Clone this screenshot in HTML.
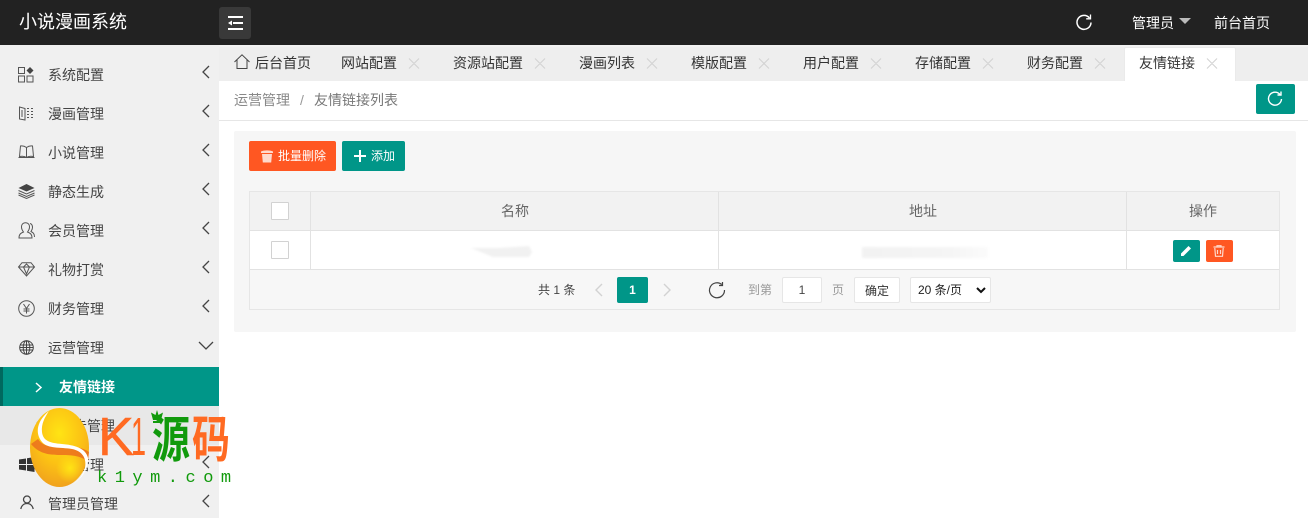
<!DOCTYPE html>
<html><head><meta charset="utf-8">
<style>
*{box-sizing:border-box}
html,body{margin:0;padding:0;width:1308px;height:518px;overflow:hidden;background:#fff;font-family:"Liberation Sans","Noto Sans CJK SC",sans-serif;font-size:14px;color:#333}
.a{position:absolute}
.t{position:absolute;white-space:nowrap;line-height:20px}
svg{position:absolute;overflow:visible}
.nav{position:absolute;left:48px;color:#444;font-size:14px;line-height:20px;white-space:nowrap}
.tab{position:absolute;top:46px;line-height:34px;font-size:14px;color:#333;white-space:nowrap}
</style></head><body>

<!-- top bar -->
<div class="a" style="left:0;top:0;width:1308px;height:45px;background:#222"></div>
<div class="t" style="left:19px;top:11px;font-size:18px;line-height:22px;color:#fff">小说漫画系统</div>
<div class="a" style="left:219px;top:7px;width:32px;height:32px;background:#393939;border-radius:3px"></div>
<svg style="left:227px;top:15px" width="16" height="16" fill="none" stroke="#fff" stroke-width="2"><path d="M1 2H16M6 8H16M1 14H16"/><path d="M1 8L5 5.500V10.500Z" fill="#fff" stroke="none"/></svg>
<svg style="left:1076px;top:14px" width="16" height="16" fill="none" stroke="#fff" stroke-width="1.500"><path d="M13.500 4A7 7 0 1 0 15 8.500"/><path d="M14.500 .5V4.800H10.200" stroke-width="1.300"/></svg>
<div class="t" style="left:1132px;top:13px;color:#fff">管理员</div>
<div class="a" style="left:1179px;top:18px;width:0;height:0;border-left:6px solid transparent;border-right:6px solid transparent;border-top:6px solid #bbb"></div>
<div class="t" style="left:1214px;top:13px;color:#fff">前台首页</div>

<!-- sidebar -->
<div class="a" style="left:0;top:45px;width:219px;height:473px;background:#f0f0f0"></div>
<div class="a" style="left:0;top:367px;width:219px;height:39px;background:#009688;border-left:3px solid #00695f"></div>
<div class="a" style="left:0;top:406px;width:219px;height:39px;background:#e8e8e8"></div>

<div class="nav" style="top:65px">系统配置</div>
<div class="nav" style="top:104px">漫画管理</div>
<div class="nav" style="top:143px">小说管理</div>
<div class="nav" style="top:182px">静态生成</div>
<div class="nav" style="top:221px">会员管理</div>
<div class="nav" style="top:260px">礼物打赏</div>
<div class="nav" style="top:299px">财务管理</div>
<div class="nav" style="top:338px">运营管理</div>
<div class="t" style="left:59px;top:377px;color:#fff;font-weight:bold">友情链接</div>
<div class="t" style="left:59px;top:416px;color:#444">广告管理</div>
<div class="nav" style="top:455px">系统管理</div>
<div class="nav" style="top:494px">管理员管理</div>

<!-- chevrons -->
<svg style="left:0;top:0" width="219" height="518" fill="none" stroke="#444" stroke-width="1.300">
<path d="M209 66L203 72L209 78M209 105L203 111L209 117M209 144L203 150L209 156M209 183L203 189L209 195M209 222L203 228L209 234M209 261L203 267L209 273M209 300L203 306L209 312M209 456L203 462L209 468M209 495L203 501L209 507"/>
<path d="M199 342L206 349L213 342"/>
<path d="M36 383L41 387.500L36 392" stroke="#fff" stroke-width="1.500"/>
<path d="M37 422L41 426L37 430"/>
</svg>

<!-- sidebar icons -->
<svg style="left:18px;top:67px" width="16" height="16" fill="none" stroke="#555"><rect x=".5" y=".5" width="6" height="6"/><rect x=".5" y="9" width="6" height="6"/><rect x="9" y="9" width="6" height="6"/><path d="M12 0L15.500 3.500L12 7L8.500 3.500Z" fill="#444" stroke="none"/></svg>
<svg style="left:19px;top:106px" width="15" height="15" fill="none" stroke="#555"><path d="M.5 1L6 2.500V14L.5 13Z"/><path d="M3 4V11"/><path d="M8 2.500H10M8 5.500H10M8 8.500H10M8 11.500H10M12 2.500H14M12 5.500H14M12 8.500H14M12 11.500H14"/></svg>
<svg style="left:18px;top:145px" width="17" height="14" fill="none" stroke="#555"><path d="M8.500 2.500C6 .8 4 .8 2.500 1L1.500 11.500C4 11 6.500 11 8.500 12.500C10.500 11 13 11 15.500 11.500L14.500 1C13 .8 11 .8 8.500 2.500ZM8.500 2.500V12.500M.5 12.500H16.500"/></svg>
<svg style="left:18px;top:184px" width="17" height="15" fill="#444"><path d="M8.500 0L16.500 4L8.500 7.500L.5 4Z"/><path d="M.5 6.500L8.500 10L16.500 6.500M.5 9L8.500 12.500L16.500 9M.5 11L8.500 14.500L16.500 11" fill="none" stroke="#555"/></svg>
<svg style="left:18px;top:222px" width="17" height="17" fill="none" stroke="#555"><path d="M1 16C1 12 3 11 5.500 10C4 8 3.500 6.500 3.500 5C3.500 2 5.500 .7 7.500 .7C9.500 .7 11.500 2 11.500 5C11.500 6.500 11 8 9.500 10C12 11 14 12 14 16Z"/><path d="M12 1.500C14 2 14.500 4 14.500 5.500C14.500 7 14 8 13 9.500C15 10.500 16.500 11.500 16.500 15"/></svg>
<svg style="left:18px;top:262px" width="17" height="15" fill="none" stroke="#555"><path d="M4 .7H13L16.500 5L8.500 14L.5 5ZM.5 5H16.500M5.500 5L8.500 12L11.500 5L8.500 2Z"/></svg>
<svg style="left:18px;top:300px" width="17" height="17" fill="none" stroke="#555"><circle cx="8.500" cy="8.500" r="7.800"/><path d="M5.500 4L8.500 8.500L11.500 4M8.500 8.500V13.500M5.500 9H11.500M5.500 11H11.500"/></svg>
<svg style="left:19px;top:340px" width="15" height="15" fill="none" stroke="#444"><circle cx="7.500" cy="7.500" r="6.800"/><ellipse cx="7.500" cy="7.500" rx="3.300" ry="6.800"/><path d="M1 5H14M1 7.500H14M1 10H14M7.500 1V14"/></svg>
<svg style="left:19px;top:457px" width="16" height="15" fill="#333"><path d="M0 2.500L7 1.500V7H0ZM8 1.300L15.500 0V7H8ZM0 8H7V13.500L0 12.500ZM8 8H15.500V15L8 13.700Z"/></svg>
<svg style="left:20px;top:495px" width="14" height="15" fill="none" stroke="#444" stroke-width="1.300"><circle cx="7" cy="4.500" r="3.500"/><path d="M.8 14C1.500 10.500 4 8.500 7 8.500C10 8.500 12.500 10.500 13.200 14"/></svg>

<!-- tabs -->
<div class="a" style="left:219px;top:45px;width:1089px;height:36px;background:#eeeeee"></div>
<div class="a" style="left:219px;top:45px;width:1089px;height:2px;background:#f2f2f2"></div>
<div class="a" style="left:1124px;top:47px;width:112px;height:34px;background:#fff;border-radius:2px 2px 0 0;border:1px solid #eaeaea;border-bottom:0"></div>
<svg style="left:234px;top:54px" width="16" height="16" fill="none" stroke="#444"><path d="M.5 8L8 .8L15.500 8M3 6V14.500H13V6"/></svg>
<div class="tab" style="left:255px">后台首页</div>
<div class="tab" style="left:341px">网站配置</div>
<div class="tab" style="left:453px">资源站配置</div>
<div class="tab" style="left:579px">漫画列表</div>
<div class="tab" style="left:691px">模版配置</div>
<div class="tab" style="left:803px">用户配置</div>
<div class="tab" style="left:915px">存储配置</div>
<div class="tab" style="left:1027px">财务配置</div>
<div class="tab" style="left:1139px">友情链接</div>
<svg style="left:0;top:0" width="1308" height="80" fill="none" stroke="#d2d2d2" stroke-width="1">
<path d="M409 58.500L419 68.500M419 58.500L409 68.500M535 58.500L545 68.500M545 58.500L535 68.500M647 58.500L657 68.500M657 58.500L647 68.500M759 58.500L769 68.500M769 58.500L759 68.500M871 58.500L881 68.500M881 58.500L871 68.500M983 58.500L993 68.500M993 58.500L983 68.500M1095 58.500L1105 68.500M1105 58.500L1095 68.500M1207 58.500L1217 68.500M1217 58.500L1207 68.500"/>
</svg>

<!-- breadcrumb -->
<div class="a" style="left:219px;top:120px;width:1089px;height:1px;background:#e6e6e6"></div>
<div class="t" style="left:234px;top:90px;color:#888">运营管理</div>
<div class="t" style="left:300px;top:90px;color:#999">/</div>
<div class="t" style="left:314px;top:90px;color:#777">友情链接列表</div>
<div class="a" style="left:1256px;top:84px;width:39px;height:30px;background:#009688;border-radius:2px"></div>
<svg style="left:1267px;top:91px" width="16" height="16" fill="none" stroke="#fff" stroke-width="1.400"><path d="M13 3.500A6.500 6.500 0 1 0 14.500 8"/><path d="M14 .5V4H10.500"/></svg>

<!-- panel -->
<div class="a" style="left:234px;top:131px;width:1062px;height:201px;background:#f6f6f6;border-radius:2px"></div>
<div class="a" style="left:249px;top:141px;width:87px;height:30px;background:#ff5722;border-radius:2px"></div>
<svg style="left:261px;top:150px" width="12" height="13" fill="#ffd9cc"><path d="M0 1.500C3 0 9 0 12 1.500V3H0Z"/><path d="M1 4H11L10.200 12.500H1.800Z"/></svg>
<div class="t" style="left:278px;top:146px;color:#fff;font-size:12px">批量删除</div>
<div class="a" style="left:342px;top:141px;width:63px;height:30px;background:#009688;border-radius:2px"></div>
<svg style="left:354px;top:150px" width="12" height="12" fill="none" stroke="#fff" stroke-width="2"><path d="M0 6H12M6 0V12"/></svg>
<div class="t" style="left:371px;top:146px;color:#fff;font-size:12px">添加</div>

<!-- table -->
<div class="a" style="left:249px;top:191px;width:1031px;height:119px;border:1px solid #e6e6e6;background:#f7f7f7"></div>
<div class="a" style="left:250px;top:192px;width:1029px;height:38px;background:#f2f2f2"></div>
<div class="a" style="left:250px;top:231px;width:1029px;height:38px;background:#fff"></div>
<div class="a" style="left:250px;top:230px;width:1029px;height:1px;background:#e2e2e2"></div>
<div class="a" style="left:250px;top:269px;width:1029px;height:1px;background:#e2e2e2"></div>
<div class="a" style="left:310px;top:192px;width:1px;height:77px;background:#e2e2e2"></div>
<div class="a" style="left:718px;top:192px;width:1px;height:77px;background:#e2e2e2"></div>
<div class="a" style="left:1126px;top:192px;width:1px;height:77px;background:#e2e2e2"></div>
<div class="a" style="left:271px;top:202px;width:18px;height:18px;background:#fff;border:1px solid #d2d2d2;border-radius:1px"></div>
<div class="a" style="left:271px;top:241px;width:18px;height:18px;background:#fff;border:1px solid #d2d2d2;border-radius:1px"></div>
<div class="t" style="left:501px;top:201px;color:#666">名称</div>
<div class="t" style="left:909px;top:201px;color:#666">地址</div>
<div class="t" style="left:1189px;top:201px;color:#666">操作</div>
<svg style="left:471px;top:246px;filter:blur(1px)" width="62" height="12" fill="#f1f1f1"><path d="M0 2L28 2L58 0L61 6L58 11L22 11Z"/></svg>
<div class="a" style="left:862px;top:247px;width:126px;height:11px;background:linear-gradient(90deg,#f2f2f2,#f5f5f5 70%,#fbfbfb);filter:blur(1px)"></div>

<div class="a" style="left:1173px;top:240px;width:27px;height:22px;background:#009688;border-radius:2px"></div>
<svg style="left:1180px;top:245px" width="12" height="12" fill="#fff"><path d="M8.500 1L11 3.500L3.500 11H1V8.500Z"/></svg>
<div class="a" style="left:1206px;top:240px;width:27px;height:22px;background:#ff5722;border-radius:2px"></div>
<svg style="left:1213px;top:245px" width="12" height="12" fill="none" stroke="#ffd9cc" stroke-width="1.200"><path d="M.5 2H11.500M4 2V.7H8V2M1.800 3L2.500 11.300H9.500L10.200 3M4.500 5V9M7.500 5V9"/></svg>

<!-- pager -->
<div class="t" style="left:538px;top:280px;font-size:12px;color:#444">共 1 条</div>
<svg style="left:594px;top:283px" width="90" height="14" fill="none" stroke="#d2d2d2" stroke-width="1.400"><path d="M8 1L2 7L8 13M70 1L76 7L70 13"/></svg>
<div class="a" style="left:617px;top:277px;width:31px;height:26px;background:#009688;border-radius:2px"></div>
<div class="t" style="left:617px;top:280px;width:31px;text-align:center;font-size:12px;color:#fff;font-weight:bold">1</div>
<svg style="left:709px;top:282px" width="16" height="16" fill="none" stroke="#444" stroke-width="1.200"><path d="M12.800 2.500A7.500 7.500 0 1 0 15.500 8"/><path d="M13.500 0V3.500H10"/></svg>
<div class="t" style="left:748px;top:280px;font-size:12px;color:#999">到第</div>
<div class="a" style="left:782px;top:277px;width:40px;height:26px;background:#fff;border:1px solid #e6e6e6;border-radius:2px"></div>
<div class="t" style="left:782px;top:280px;width:40px;text-align:center;font-size:12px;color:#444">1</div>
<div class="t" style="left:832px;top:280px;font-size:12px;color:#999">页</div>
<div class="a" style="left:854px;top:277px;width:46px;height:26px;background:#fff;border:1px solid #e6e6e6;border-radius:2px"></div>
<div class="t" style="left:854px;top:281px;width:46px;text-align:center;font-size:12px;color:#333">确定</div>
<div class="a" style="left:910px;top:277px;width:81px;height:26px;background:#fff;border:1px solid #e6e6e6;border-radius:2px"></div>
<div class="t" style="left:918px;top:280px;font-size:12px;color:#222">20 条/页</div>
<svg style="left:976px;top:287px" width="10" height="7" fill="none" stroke="#111" stroke-width="2"><path d="M1 1L5 5L9 1"/></svg>

<!-- watermark -->
<svg style="left:30px;top:408px" width="60" height="80">
<defs>
<radialGradient id="g" cx="50%" cy="32%" r="70%"><stop offset="0" stop-color="#ffe414"/><stop offset=".55" stop-color="#fcc214"/><stop offset="1" stop-color="#f0a01e"/></radialGradient>
<radialGradient id="h" cx="50%" cy="50%" r="50%"><stop offset="0" stop-color="#ffe414"/><stop offset="1" stop-color="#ffe414" stop-opacity="0"/></radialGradient>
</defs>
<ellipse cx="29.500" cy="39.500" rx="29.500" ry="39.500" fill="url(#g)"/>
<ellipse cx="40" cy="60" rx="14" ry="15" fill="url(#h)"/>
<path d="M1 36C10 47 22 47 32 47C42 47 52 48 58 54L59 44C52 39 42 38 32 38C22 38 14 40 8 31Z" fill="#ea6a1e" opacity=".8"/>
<path d="M19 3C8 12 4 24 12 34C18 41 30 39 42 41C52 43 57 50 55 60C53 67 48 73 42 77C52 71 59 60 58 50C56 40 44 37 32 36C20 35 13 33 12 24C11 16 15 9 19 3Z" fill="#fff"/>
</svg>
<div class="t" style="left:98px;top:404px;font-size:54px;line-height:66px;color:#ff6a22;-webkit-text-stroke:.5px #ff6a22">K</div>
<div class="t" style="left:131px;top:404px;font-size:54px;line-height:66px;color:#ff6a22;transform:scaleX(.5);transform-origin:left">1</div>
<div class="t" style="left:152px;top:413px;font-size:50px;line-height:54px;color:#119a0c;font-weight:bold;transform:scaleX(.76);transform-origin:left">源</div>
<div class="t" style="left:192px;top:413px;font-size:50px;line-height:54px;color:#ff6a22;font-weight:bold;transform:scaleX(.76);transform-origin:left">码</div>
<svg style="left:149px;top:410px" width="16" height="16" fill="#119a0c"><path d="M8 0L9.500 5L14 2.500L12 10H4L2 2.500L6.500 5Z"/><rect x="4" y="11" width="8" height="2"/></svg>
<div class="t" style="left:97px;top:468px;font-family:'Liberation Mono',monospace;font-size:17px;line-height:22px;color:#119a0c;letter-spacing:7.500px">k1ym.com</div>

</body></html>
